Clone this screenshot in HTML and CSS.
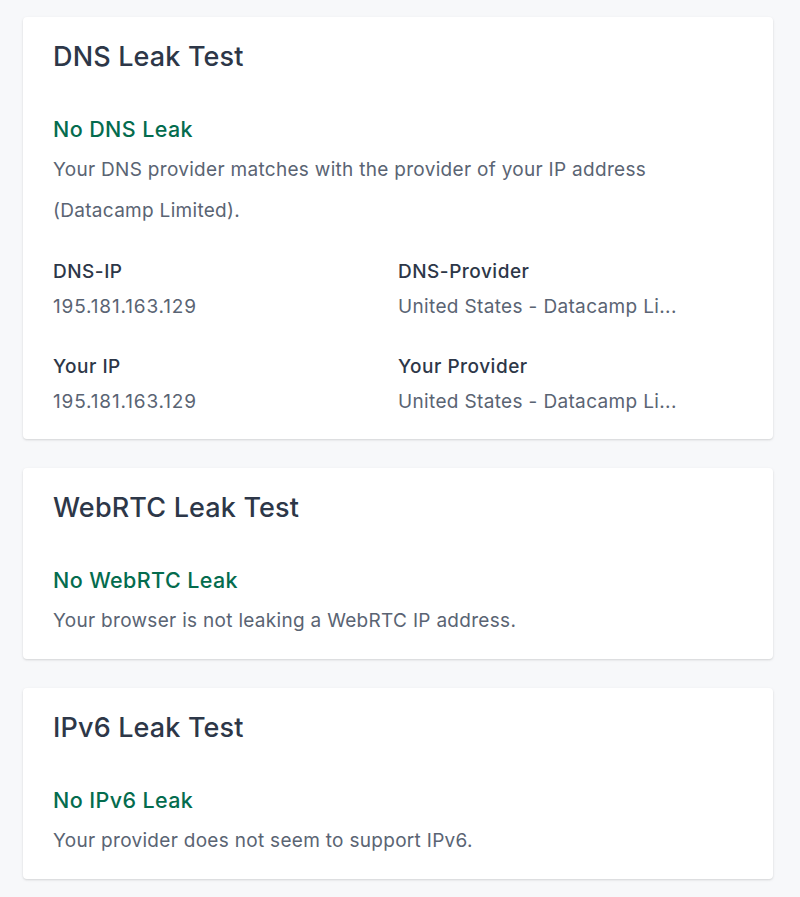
FILE: index.html
```html
<!DOCTYPE html>
<html lang="en">
<head>
<meta charset="utf-8">
<title>Leak Tests</title>
<link rel="stylesheet" href="styles.css">
</head>
<body>
<main class="stack">
  <section class="card">
    <h2 class="card-title">DNS Leak Test</h2>
    <h3 class="status">No DNS Leak</h3>
    <p class="desc">Your DNS provider matches with the provider of your IP address (Datacamp Limited).</p>
    <div class="grid">
      <div class="item">
        <div class="label">DNS-IP</div>
        <div class="value num">195.181.163.129</div>
      </div>
      <div class="item">
        <div class="label">DNS-Provider</div>
        <div class="value">United States - Datacamp Li...</div>
      </div>
      <div class="item">
        <div class="label">Your IP</div>
        <div class="value num">195.181.163.129</div>
      </div>
      <div class="item">
        <div class="label">Your Provider</div>
        <div class="value">United States - Datacamp Li...</div>
      </div>
    </div>
  </section>
  <section class="card">
    <h2 class="card-title">WebRTC Leak Test</h2>
    <h3 class="status">No WebRTC Leak</h3>
    <p class="desc">Your browser is not leaking a WebRTC IP address.</p>
  </section>
  <section class="card">
    <h2 class="card-title">IPv6 Leak Test</h2>
    <h3 class="status">No IPv6 Leak</h3>
    <p class="desc">Your provider does not seem to support IPv6.</p>
  </section>
</main>
</body>
</html>
```

FILE: styles.css
```css
html, body {
  margin: 0;
  padding: 0;
}
body {
  background: #f7f8fa;
  font-family: Inter, "Noto Sans", sans-serif;
  color: #2d3748;
}
.stack {
  display: flex;
  flex-direction: column;
  gap: 29px;
  padding: 17px 27px 18px 23px;
}
.card {
  background: #ffffff;
  border-radius: 4px;
  box-shadow: 0 1px 3px rgba(0, 0, 0, 0.10), 0 1px 2px rgba(0, 0, 0, 0.06);
  padding: 22px 30px 18px;
}
.card-title {
  margin: 0;
  font-size: 27px;
  font-weight: 500;
  line-height: 36px;
  letter-spacing: 0.15px;
  color: #2d3748;
}
.status {
  margin: 40px 0 6px;
  font-size: 21.5px;
  font-weight: 500;
  line-height: 28px;
  letter-spacing: 0.4px;
  color: #046c4e;
}
.desc {
  margin: 0;
  font-size: 19px;
  line-height: 41px;
  letter-spacing: 0.3px;
  color: #5a6473;
}
.grid {
  display: grid;
  grid-template-columns: 1fr 1fr;
  row-gap: 27px;
  margin-top: 27px;
}
.label {
  font-size: 19px;
  font-weight: 500;
  line-height: 28px;
  letter-spacing: 0.5px;
  color: #2d3748;
}
.value {
  margin-top: 2px;
  font-size: 19px;
  line-height: 38px;
  letter-spacing: 0.35px;
  color: #5a6473;
}
.num {
  letter-spacing: 0.85px;
}
```
